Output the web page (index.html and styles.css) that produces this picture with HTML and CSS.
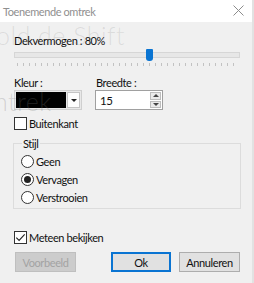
FILE: index.html
```html
<html lang="nl">
<head>
    <meta charset="UTF-8">
    <title>Toenemende omtrek</title>
    <link rel="stylesheet" href="styles.css">
</head>
<body>
<div class="window">
    <header class="titlebar">
        <span class="title">Toenemende omtrek</span>
        <svg class="close" width="11" height="11" viewBox="0 0 11 11"><path d="M0.5 0.5 L10.5 10.5 M10.5 0.5 L0.5 10.5" stroke="#8c8c8c" stroke-width="1"/></svg>
    </header>

    <main class="content">
        <!-- Opacity slider -->
        <div class="label-line">Dekvermogen : 80%</div>
        <div class="slider">
            <div class="track"></div>
            <div class="thumb" style="left:132px"></div>
            <div class="ticks"></div>
        </div>

        <!-- Colour + width -->
        <div class="pair">
            <div class="field">
                <span class="lbl">Kleur :</span>
                <div class="combo">
                    <div class="swatch"></div>
                    <div class="drop"><span class="arrow"></span></div>
                </div>
            </div>
            <div class="field">
                <span class="lbl">Breedte :</span>
                <div class="spin">
                    <span class="val">15</span>
                    <div class="spin-btns">
                        <div class="sb up"><span></span></div>
                        <div class="sb down"><span></span></div>
                    </div>
                </div>
            </div>
        </div>

        <label class="check"><span class="box"></span>Buitenkant</label>

        <!-- Style group -->
        <div class="group">
            <span class="legend">Stijl</span>
            <label class="radio"><span class="dot"></span>Geen</label>
            <label class="radio on"><span class="dot"></span>Vervagen</label>
            <label class="radio"><span class="dot"></span>Verstrooien</label>
        </div>

        <label class="check preview"><span class="box">
            <svg width="11" height="11" viewBox="0 0 11 11"><path d="M1.3 5.6 L4.1 8.4 L9.7 2.3" fill="none" stroke="#222" stroke-width="1.1"/></svg>
        </span>Meteen bekijken</label>

        <div class="buttons">
            <button class="btn" disabled>Voorbeeld</button>
            <div class="grow"></div>
            <button class="btn default">Ok</button>
            <button class="btn">Annuleren</button>
        </div>
    </main>

    <!-- faint text of the window behind -->
    <div class="ghost g1">old de Shift</div>
    <div class="ghost g2">ntrek</div>
</div>
</body>
</html>
```

FILE: styles.css
```css
*{box-sizing:border-box;margin:0;padding:0}
body{font-family:Lato,"Noto Sans",sans-serif;font-size:11px;letter-spacing:-.4px;color:#111;background:#fff}
.window{position:relative;width:254px;height:283px;background:#f0f0f0;border-right:2px solid #e2e2e2;overflow:hidden}

.titlebar{height:22px;background:#fff;display:flex;align-items:center;justify-content:space-between;padding:0 8px 0 3px}
.title{color:#8f8f8f;font-size:11px}
.close{margin-top:-1px}

.content{padding:10px 12px 0 14px;display:flex;flex-direction:column}
.label-line{height:18px;line-height:18px}

.slider{position:relative;height:18px}
.track{position:absolute;left:0;right:0;top:2px;height:6px;background:#e7e7e7;border:1px solid #d6d6d6}
.thumb{position:absolute;top:-1px;width:7px;height:12px;background:#0a74d2;border-radius:1px 1px 3px 3px}
.ticks{position:absolute;left:3px;right:3px;top:13px;height:3px;
    background:repeating-linear-gradient(90deg,#c2c2c2 0 1px,transparent 1px 6px)}

.pair{display:flex;gap:13px;margin-top:7px}
.field{display:flex;flex-direction:column}
.lbl{height:15px;line-height:15px}
.field + .field .lbl{padding-left:1px}
.combo{width:68px;height:20px;border:1px solid #cfcfcf;background:#e8e8e8;display:flex;padding:1px;gap:1px}
.swatch{flex:1;background:#000}
.drop{width:13px;background:#fdfdfd;border:1px solid #c4c4c4;display:flex;align-items:center;justify-content:center}
.arrow{border-left:3px solid transparent;border-right:3px solid transparent;border-top:3px solid #222}
.spin{width:68px;height:20px;border:1px solid #a0a0a0;background:#fff;display:flex;align-items:center;padding:0 1px 0 4px;font-size:11.5px}
.val{flex:1}
.spin-btns{width:11px;height:16px;display:flex;flex-direction:column;gap:1px}
.sb{flex:1;background:#eaeaea;border:1px solid #bdbdbd;display:flex;align-items:center;justify-content:center}
.sb span{border-left:3px solid transparent;border-right:3px solid transparent}
.up span{border-bottom:3px solid #444}
.down span{border-top:3px solid #444}

.check{display:flex;align-items:center;gap:2px;height:14px;margin-top:6px}
.box{width:13px;height:13px;border:1px solid #333;background:#fff;display:flex;align-items:center;justify-content:center}

.group{position:relative;border:1px solid #dcdcdc;margin:13px 0 0 -1px;padding:8px 0 0 7px;width:228px;height:66px}
.legend{position:absolute;top:-8px;left:8px;padding:0 1px;background:#f0f0f0;line-height:15px}
.radio{display:flex;align-items:center;gap:2px;height:18px}
.dot{width:13px;height:13px;border:1px solid #333;border-radius:50%;background:#fff;display:flex;align-items:center;justify-content:center}
.radio.on .dot::after{content:"";width:7px;height:7px;border-radius:50%;background:#222}

.preview{margin-top:21px}

.buttons{display:flex;gap:8px;margin-top:8px;width:226px;padding-left:1px}
.grow{flex:1}
.btn{width:61px;height:20px;font:inherit;letter-spacing:inherit;background:#e1e1e1;border:1px solid #adadad;color:#111}
.btn:disabled{background:#cccccc;border-color:#bfbfbf;color:#a3a3a3}
.btn.default{border:2px solid #0a74d2;width:60px}

.ghost{position:absolute;left:-4px;font-size:25px;font-weight:300;line-height:24px;letter-spacing:.5px;color:rgba(110,110,110,.16);pointer-events:none;white-space:nowrap}
.g1{top:23px}
.g2{top:89px;left:-6px;color:rgba(120,120,120,.26)}
```
